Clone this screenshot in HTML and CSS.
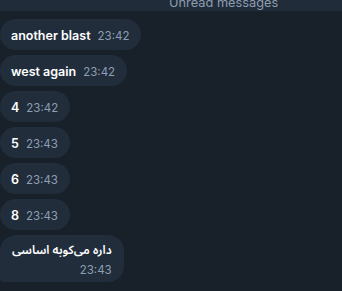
FILE: index.html
```html
<!DOCTYPE html>
<html lang="en">
<head>
<meta charset="utf-8">
<link rel="stylesheet" href="styles.css">
</head>
<body>
<div class="unread"><span class="unread-text">Unread messages</span></div>
<div class="messages">
  <div class="bubble"><span class="text">another blast</span><span class="time">23:42</span></div>
  <div class="bubble"><span class="text">west again</span><span class="time">23:42</span></div>
  <div class="bubble"><span class="text">4</span><span class="time">23:42</span></div>
  <div class="bubble"><span class="text">5</span><span class="time">23:43</span></div>
  <div class="bubble"><span class="text">6</span><span class="time">23:43</span></div>
  <div class="bubble"><span class="text">8</span><span class="time">23:43</span></div>
  <div class="bubble bubble-last">
    <span class="text rtl" dir="rtl">داره می‌کوبه اساسی</span>
    <span class="time">23:43</span>
  </div>
</div>
</body>
</html>
```
FILE: styles.css
```css
html, body {
  margin: 0;
  padding: 0;
  background: #18202a;
  height: 100%;
  overflow: hidden;
  font-family: Inter, "DejaVu Sans", sans-serif;
}
.unread {
  height: 11px;
  background: #202c3a;
  display: flex;
  align-items: flex-end;
  padding-left: 169px;
  overflow: hidden;
}
.unread-text {
  font-size: 12.8px;
  line-height: 16px;
  color: #8d9db0;
  white-space: nowrap;
}
.messages {
  display: flex;
  flex-direction: column;
  align-items: flex-start;
  gap: 5px;
  padding-top: 8px;
}
.bubble {
  box-sizing: border-box;
  height: 31px;
  display: flex;
  align-items: baseline;
  gap: 7px;
  padding: 2px 12px 0 11px;
  background: #212d3b;
  border-radius: 16px;
  line-height: 29px;
}
.text {
  color: #ffffff;
  font-size: 12.5px;
  font-weight: 600;
}
.time {
  color: #8e9fb3;
  font-size: 11.5px;
}
.bubble-last {
  height: 47px;
  flex-direction: column;
  align-items: flex-end;
  gap: 0;
  padding: 6px 12px 0 12px;
  border-bottom-left-radius: 4px;
  line-height: normal;
}
.bubble-last .text {
  font-family: "Noto Sans Arabic", "DejaVu Sans", sans-serif;
  font-size: 12px;
  font-weight: 600;
  line-height: 20px;
}
.bubble-last .time {
  line-height: 18px;
}
```
